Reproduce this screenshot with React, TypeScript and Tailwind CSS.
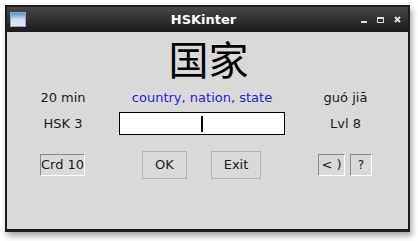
export default function App() {
  const font = { fontFamily: '"DejaVu Sans", sans-serif' };
  return (
    <div className="w-[418px] h-[241px] bg-white pt-[5px] pl-[5px]" style={font}>
      <div className="w-[405px] h-[227px] flex flex-col border-2 border-b-[3px] border-[#1c1c1c] bg-[#d9d9d9] shadow-[2px_4px_6px_rgba(0,0,0,0.35)]">
        {/* title bar */}
        <div className="h-[25px] flex items-center px-[3px] bg-gradient-to-b from-[#474747] to-[#1b1b1b]">
          <div className="w-[16px] h-[15px] bg-gradient-to-b from-[#5d8fd6] via-[#cfe0f4] to-[#e8e8ee] border border-[#8fa5c4]" />
          <div className="flex-1 text-center text-white font-bold text-[13px] leading-none pl-[20px]">HSKinter</div>
          <div className="flex items-center gap-[10px] pr-[4px]">
            <div className="w-[6px] h-[2px] bg-[#e0e0e0] mt-[5px]" />
            <div className="w-[7px] h-[6px] border border-t-2 border-[#e0e0e0]" />
            <svg width="7" height="7" viewBox="0 0 7 7">
              <path d="M1 1L6 6M6 1L1 6" stroke="#e0e0e0" strokeWidth="2" />
            </svg>
          </div>
        </div>
        {/* body */}
        <div className="flex-1 flex flex-col text-[13px] text-[#1a1a1a]">
          <div
            className="h-[52px] flex items-center justify-center text-[40px] leading-none text-black pl-[2px]"
            style={{ fontFamily: '"Noto Sans CJK SC", sans-serif' }}
          >
            国家
          </div>
          <div className="grid grid-cols-[112px_166px_121px] h-[27px] items-center text-center">
            <div>20 min</div>
            <div className="text-[#1f1fd6]">country, nation, state</div>
            <div>guó jiā</div>
          </div>
          <div className="grid grid-cols-[112px_166px_121px] h-[25px] items-center text-center">
            <div>HSK 3</div>
            <div className="h-[23px] bg-white border border-black flex items-center justify-center">
              <div className="w-[2px] h-[16px] bg-black" />
            </div>
            <div>Lvl 8</div>
          </div>
          <div className="flex items-center h-[28px] mt-[15px] pl-[33px] whitespace-nowrap">
            <div className="w-[45px] h-[22px] flex items-center justify-center border border-[#8a8a8a] border-r-white border-b-white">
              Crd 10
            </div>
            <div className="w-[45px] h-[28px] ml-[57px] flex items-center justify-center border border-[#b4b4b4] bg-[#d9d9d9]">
              OK
            </div>
            <div className="w-[50px] h-[28px] ml-[24px] flex items-center justify-center border border-[#b4b4b4] bg-[#d9d9d9]">
              Exit
            </div>
            <div className="w-[27px] h-[22px] ml-[57px] flex items-center justify-center border border-[#8a8a8a] border-r-white border-b-white">
              &lt; )
            </div>
            <div className="w-[22px] h-[22px] ml-[5px] flex items-center justify-center border border-[#8a8a8a] border-r-white border-b-white text-[12px]">
              ?
            </div>
          </div>
        </div>
      </div>
    </div>
  );
}
